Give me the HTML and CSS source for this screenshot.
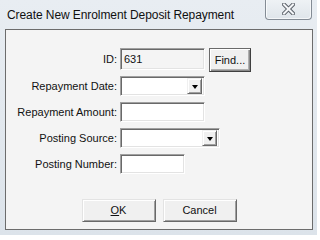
FILE: index.html
```html
<!DOCTYPE html>
<html>
<head>
<meta charset="utf-8">
<link rel="stylesheet" href="styles.css">
</head>
<body>
<div class="window">
  <div class="titlebar">
    <span class="title">Create New Enrolment Deposit Repayment</span>
    <div class="close">
      <svg width="13" height="12" viewBox="0 0 13 12">
        <path d="M2 1.5 L11 10.5 M11 1.5 L2 10.5" stroke="#5a6068" stroke-width="4" stroke-linecap="square" fill="none"/>
        <path d="M2 1.5 L11 10.5 M11 1.5 L2 10.5" stroke="#f4f6f8" stroke-width="2" stroke-linecap="square" fill="none"/>
      </svg>
    </div>
  </div>
  <div class="client">
    <div class="form">
      <div class="row row-id">
        <span class="lbl">ID:</span>
        <div class="field field-id">631</div>
        <div class="btn find">Find...</div>
      </div>
      <div class="row">
        <span class="lbl">Repayment Date:</span>
        <div class="field combo w85"><span class="drop"><span class="tri"></span></span></div>
      </div>
      <div class="row">
        <span class="lbl">Repayment Amount:</span>
        <div class="field w85"></div>
      </div>
      <div class="row">
        <span class="lbl">Posting Source:</span>
        <div class="field combo w100"><span class="drop"><span class="tri"></span></span></div>
      </div>
      <div class="row">
        <span class="lbl">Posting Number:</span>
        <div class="field w65"></div>
      </div>
    </div>
    <div class="actions">
      <div class="btn act"><u>O</u>K</div>
      <div class="btn act">Cancel</div>
    </div>
  </div>
</div>
</body>
</html>
```

FILE: styles.css
```css
* { box-sizing: border-box; }
html, body { margin: 0; padding: 0; }
body {
  width: 317px;
  height: 235px;
  overflow: hidden;
  font-family: "Liberation Sans", Arial, sans-serif;
  font-size: 11px;
  color: #111;
}
.window {
  width: 317px;
  height: 235px;
  background: linear-gradient(#e8edf2, #dce3ea);
  display: flex;
  flex-direction: column;
}
.titlebar {
  height: 29px;
  display: flex;
  align-items: flex-start;
  flex: none;
}
.title {
  font-size: 12px;
  line-height: 14px;
  padding: 8px 0 0 7px;
  color: #101010;
  letter-spacing: -0.08px;
}
.close {
  margin-left: auto;
  margin-right: 5px;
  width: 47px;
  height: 20px;
  border: 1px solid #848c95;
  border-top: none;
  border-radius: 0 0 4px 4px;
  background: linear-gradient(#eef2f5, #dfe5ea);
  box-shadow: inset 1px 0 #f8fafb, inset -1px -1px #f4f6f8;
  display: flex;
  align-items: center;
  justify-content: center;
  padding-bottom: 1px;
}
.close svg { display: block; }
.client {
  flex: none;
  margin: 0 4px 0 5px;
  height: 201px;
  border: 1px solid #6c6c6c;
  background: #f4f4f4;
  display: flex;
  flex-direction: column;
}
.form {
  padding-top: 18px;
  display: flex;
  flex-direction: column;
  gap: 6px;
}
.row {
  display: flex;
  align-items: center;
  height: 20px;
}
.row-id { height: 22px; align-items: flex-start; }
.lbl {
  width: 111px;
  margin-right: 3px;
  text-align: right;
  white-space: nowrap;
  line-height: 20px;
}
.row-id .lbl { line-height: 22px; }
.field {
  height: 20px;
  background: #fff;
  border: 1px solid;
  border-color: #a0a0a0 #ffffff #ffffff #a0a0a0;
  box-shadow: inset 1px 1px #696969, inset -1px -1px #e3e3e3;
  position: relative;
  display: flex;
  align-items: center;
}
.field-id {
  width: 85px;
  height: 22px;
  background: #f4f4f4;
  padding-left: 3px;
  line-height: 20px;
}
.w85 { width: 85px; }
.w100 { width: 100px; }
.w65 { width: 65px; }
.combo { justify-content: flex-end; padding: 2px 2px 2px 2px; }
.drop {
  width: 15px;
  height: 16px;
  background: #f0f0f0;
  border: 1px solid;
  border-color: #f0f0f0 #696969 #696969 #f0f0f0;
  box-shadow: inset 1px 1px #fff, inset -1px -1px #a0a0a0;
  display: flex;
  align-items: center;
  justify-content: center;
}
.tri {
  width: 0;
  height: 0;
  border-left: 3.5px solid transparent;
  border-right: 3.5px solid transparent;
  border-top: 4px solid #000;
  margin-top: 1px;
}
.btn {
  background: #f0f0f0;
  border: 1px solid;
  border-color: #e3e3e3 #696969 #696969 #e3e3e3;
  box-shadow: inset 1px 1px #ffffff, inset -1px -1px #a0a0a0;
  display: flex;
  align-items: center;
  justify-content: center;
  white-space: nowrap;
}
.find {
  width: 42px;
  height: 24px;
  margin-left: 4px;
  border-color: #6a6a6a #404040 #404040 #6a6a6a;
  box-shadow: inset 1px 1px #ffffff, inset -1px -1px #8a8a8a, inset -2px -2px #b0b0b0;
  padding-bottom: 1px;
}
.actions {
  margin-top: 25px;
  display: flex;
  justify-content: center;
  gap: 7px;
}
.act {
  width: 74px;
  height: 23px;
  padding-bottom: 1px;
}
.act u { text-decoration: underline; text-underline-offset: 1px; }
```
